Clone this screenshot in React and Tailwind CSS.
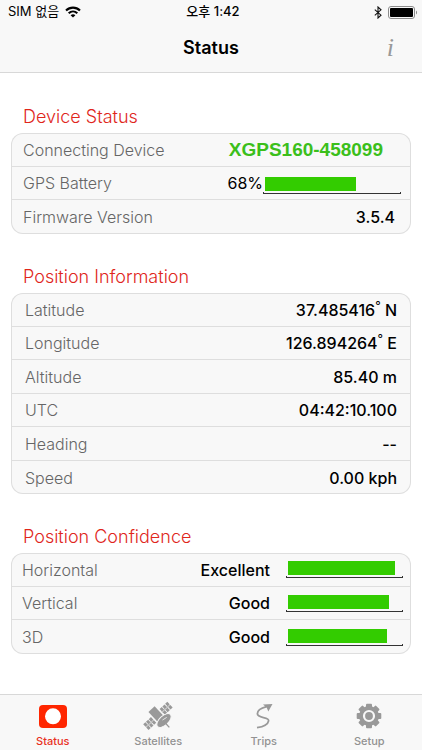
import { useState } from "react";
import clsx from "clsx";

const positionRows = [
  { label: "Latitude", value: "37.485416", unit: "N", degree: true },
  { label: "Longitude", value: "126.894264", unit: "E", degree: true },
  { label: "Altitude", value: "85.40 m" },
  { label: "UTC", value: "04:42:10.100" },
  { label: "Heading", value: "--" },
  { label: "Speed", value: "0.00 kph" },
];

const confidenceRows = [
  { label: "Horizontal", value: "Excellent", level: 95 },
  { label: "Vertical", value: "Good", level: 89 },
  { label: "3D", value: "Good", level: 88 },
];

const WifiIcon = () => (
  <svg width="16" height="12" viewBox="0 0 16 12" aria-hidden="true">
    <g fill="none" stroke="#000" strokeWidth="2.1">
      <path d="M1 4.6C5 .6 11 .6 15 4.6" />
      <path d="M3.7 7.3c2.5-2.4 6.1-2.4 8.6 0" />
    </g>
    <path d="M8 11.6 5.6 9.2c1.4-1.2 3.4-1.2 4.8 0z" />
  </svg>
);

const BluetoothIcon = () => (
  <svg width="8" height="13" viewBox="0 0 8 13" aria-hidden="true">
    <path
      d="M.8 3.6 7 9.2 4 12V1l3 2.8L.8 9.4"
      fill="none"
      stroke="#111"
      strokeWidth="1.1"
    />
  </svg>
);

const BatteryIcon = () => (
  <svg width="30" height="13" viewBox="0 0 30 13" aria-hidden="true">
    <rect x=".5" y=".5" width="26" height="12" rx="2.5" fill="none" stroke="#8c8c8c" />
    <rect x="2" y="2" width="23" height="9" rx="1" />
    <path d="M28 4.5c1.4.6 1.4 3.4 0 4z" fill="#8c8c8c" />
  </svg>
);

const StatusIcon = () => (
  <svg width="30" height="26" viewBox="0 0 30 26" aria-hidden="true">
    <rect x="1" y="2" width="28" height="23" rx="4" fill="#ff2600" />
    <circle cx="15" cy="13.3" r="8" fill="#fff" />
  </svg>
);

const SatelliteIcon = () => (
  <svg width="30" height="30" viewBox="0 0 30 30" aria-hidden="true">
    <g transform="rotate(-43 15 15)" fill="#999">
      <path d="M-1.5 11h3v3.4h-3zM2.3 11h3v3.4h-3zM6.1 11h3v3.4h-3zM-1.5 15.4h3v3.4h-3zM2.3 15.4h3v3.4h-3zM6.1 15.4h3v3.4h-3z" />
      <path d="M20.9 11h3v3.4h-3zM24.7 11h3v3.4h-3zM28.5 11h3v3.4h-3zM20.9 15.4h3v3.4h-3zM24.7 15.4h3v3.4h-3zM28.5 15.4h3v3.4h-3z" />
      <path d="M-1 14h10v1.6H-1zM20.5 14H31v1.6H20.5z" opacity=".5" />
      <path d="M10.8 5.5h8.4v13h-8.4z" />
    </g>
    <g fill="#999">
      <ellipse
        cx="21"
        cy="19.5"
        rx="8.8"
        ry="4.6"
        transform="rotate(-43 21 19.5)"
        stroke="#f8f8f8"
      />
      <path d="m21 19.5 5.8 6.4-1 .9-5.8-6.4z" />
    </g>
    <path d="m19.5 19 4.2-2.6" stroke="#f8f8f8" strokeWidth=".8" />
  </svg>
);

const TripsIcon = () => (
  <svg width="20" height="26" viewBox="0 0 20 26" aria-hidden="true">
    <path
      d="M3 24.6C9 23.7 14 21 14.6 17.8 15.3 13.3 3.4 15.8 3.4 10.8 3.4 7.2 7.4 5 12.6 3.7"
      fill="none"
      stroke="#999"
      strokeWidth="1.8"
    />
    <path d="M9 1.6 18.5 1l-4.2 7.4-1.5-3.6z" fill="#999" />
  </svg>
);

const SetupIcon = () => (
  <svg width="26" height="26" viewBox="0 0 26 26" aria-hidden="true">
    <g fill="#999">
      <rect x="10" y=".7" width="6" height="24.6" rx="1" />
      <rect x="10" y=".7" width="6" height="24.6" rx="1" transform="rotate(45 13 13)" />
      <rect x="10" y=".7" width="6" height="24.6" rx="1" transform="rotate(90 13 13)" />
      <rect x="10" y=".7" width="6" height="24.6" rx="1" transform="rotate(135 13 13)" />
      <circle cx="13" cy="13" r="10" />
    </g>
    <circle cx="13" cy="13" r="5" fill="#999" stroke="#f8f8f8" strokeWidth="2.2" />
  </svg>
);

const tabs = [
  { name: "Status", icon: StatusIcon },
  { name: "Satellites", icon: SatelliteIcon },
  { name: "Trips", icon: TripsIcon },
  { name: "Setup", icon: SetupIcon },
];

const Section = ({ title, children }) => (
  <section>
    <h2 className="mb-1 h-6 px-3 text-lg leading-6 font-light text-[#e0261b]">{title}</h2>
    <dl className="rounded-xl bg-[#f8f8f8] ring-1 ring-[#dedede] ring-inset">{children}</dl>
  </section>
);

const Row = ({ label, className, children }) => (
  <div
    className={clsx(
      "flex h-[33px] items-center justify-between border-b border-[#dedede] odd:h-[34px] last:border-b-0",
      className
    )}
  >
    <dt className="font-light text-[#666]">{label}</dt>
    {children}
  </div>
);

const Gauge = ({ label, level, className }) => (
  <div
    role="meter"
    aria-label={label}
    aria-valuemin={0}
    aria-valuemax={100}
    aria-valuenow={level}
    className={className}
  >
    <div className="px-0.5">
      <div className="h-[14px] bg-[#33cc00]" style={{ width: `${level}%` }} />
    </div>
    <div className="mt-px h-0.5 border-x border-b border-[#333]" />
  </div>
);

const App = () => {
  const [active, setActive] = useState("Status");

  return (
    <div className="flex min-h-screen flex-col bg-white font-['Inter','Noto_Sans_CJK_KR',sans-serif] text-base text-black">
      <header className="border-b border-[#d8d8d8] bg-[#f8f8f8]">
        <div className="grid h-6 grid-cols-3 items-center pr-1 pl-2 text-[13px]">
          <div className="flex items-center gap-1.5">
            <span>SIM 없음</span>
            <WifiIcon />
          </div>
          <span className="text-center font-medium">오후 1:42</span>
          <div className="flex items-center justify-end gap-1.5">
            <BluetoothIcon />
            <BatteryIcon />
          </div>
        </div>
        <div className="grid h-12 grid-cols-3 items-center px-6">
          <h1 className="col-start-2 text-center text-lg font-semibold">Status</h1>
          <button
            type="button"
            aria-label="Information"
            className="justify-self-end px-1 font-['Liberation_Serif',serif] text-[26px] leading-8 text-[#999] italic"
          >
            i
          </button>
        </div>
      </header>

      <main className="flex flex-1 flex-col gap-[31px] px-[11px] pt-8 pb-6">
        <Section title="Device Status">
          <Row label="Connecting Device" className="pr-7 pl-3">
            <dd className="pt-0.5 font-['Liberation_Sans',sans-serif] text-[19px] font-bold text-[#3bbf1b]">
              XGPS160-458099
            </dd>
          </Row>
          <Row label="GPS Battery" className="pr-2.5 pl-3">
            <dd className="flex items-center">
              <span>68%</span>
              <Gauge label="GPS Battery" level={68} className="mt-1 w-[138px]" />
            </dd>
          </Row>
          <Row label="Firmware Version" className="pr-4 pl-3">
            <dd className="font-medium">3.5.4</dd>
          </Row>
        </Section>

        <Section title="Position Information">
          {positionRows.map((row) => (
            <Row key={row.label} label={row.label} className="px-[14px]">
              <dd className="font-medium">
                {row.value}
                {row.degree && <span className="align-top text-xs font-normal">°</span>}
                {row.unit && ` ${row.unit}`}
              </dd>
            </Row>
          ))}
        </Section>

        <Section title="Position Confidence">
          {confidenceRows.map((row) => (
            <Row key={row.label} label={row.label} className="pr-2 pl-[11px]">
              <dd className="flex items-center gap-4 font-medium">
                <span>{row.value}</span>
                <Gauge label={row.label} level={row.level} className="w-[117px]" />
              </dd>
            </Row>
          ))}
        </Section>
      </main>

      <nav className="grid h-14 grid-cols-4 border-t border-[#d8d8d8] bg-[#f8f8f8]">
        {tabs.map(({ name, icon: Icon }) => (
          <button
            key={name}
            type="button"
            onClick={() => setActive(name)}
            className={clsx(
              "flex flex-col items-center gap-0.5 pt-1.5 text-[11px] leading-4 font-medium",
              active === name ? "text-[#e8301f]" : "text-[#929292]"
            )}
          >
            <span className="flex h-[30px] items-center">
              <Icon />
            </span>
            {name}
          </button>
        ))}
      </nav>
    </div>
  );
};

export default App;
